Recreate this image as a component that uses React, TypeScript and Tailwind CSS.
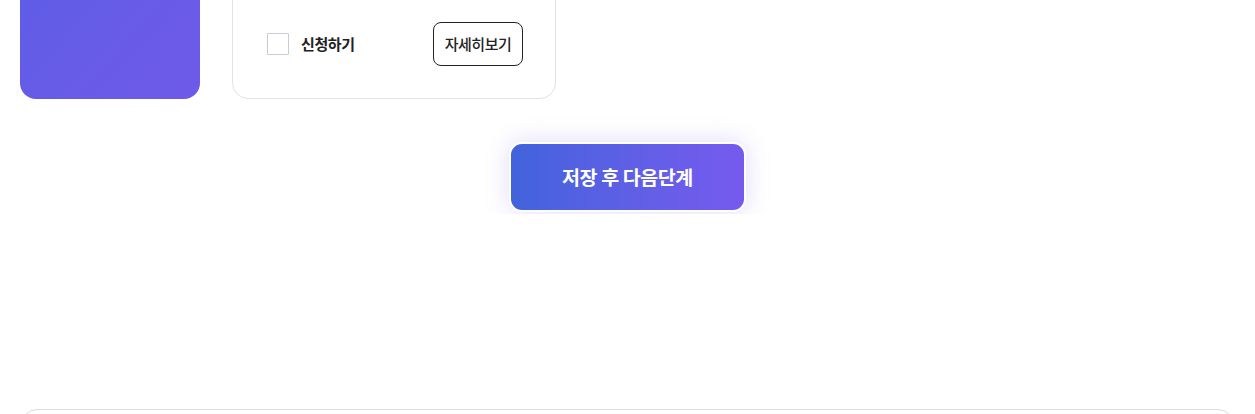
import React from "react";

export default function App() {
  const font = { fontFamily: '"Noto Sans CJK KR", "Noto Sans", sans-serif' };
  return (
    <div className="h-[414px] w-full bg-white overflow-hidden" style={font}>
      <div className="flex items-start gap-8 pl-5 -mt-[101px]">
        <div className="w-[180px] h-[200px] rounded-2xl bg-gradient-to-br from-[#5a5de6] to-[#6f5ae9]" />
        <div className="w-[324px] h-[200px] rounded-2xl border border-[#e3e3e6] bg-white flex flex-col justify-end pl-[34px] pr-[32px] pb-[32px]">
          <div className="flex items-center justify-between h-[44px]">
            <label className="flex items-center gap-3">
              <span className="w-[22px] h-[22px] border border-[#c9ccd4] bg-white rounded-[1px]" />
              <span className="text-[15px] font-semibold text-[#222] tracking-[-0.4px]">신청하기</span>
            </label>
            <button className="w-[90px] h-[44px] rounded-lg border border-[#222] bg-white text-[15px] font-medium text-[#222] tracking-[-0.5px]">
              자세히보기
            </button>
          </div>
        </div>
      </div>

      <div className="flex justify-center overflow-hidden pt-[24px] pb-[2px] mt-[19px]">
        <div className="px-5">
          <button className="w-[237px] h-[70px] rounded-[13px] border-2 border-white bg-gradient-to-r from-[#4163dc] to-[#765aef] text-white text-[19.5px] font-bold tracking-[-0.4px] shadow-[0_0_24px_rgba(110,95,230,0.22)]">
            저장 후 다음단계
          </button>
        </div>
      </div>

      <div className="mt-[195px] mx-[21px] h-[40px] rounded-t-2xl border border-[#dcdcdf] bg-white" />
    </div>
  );
}
